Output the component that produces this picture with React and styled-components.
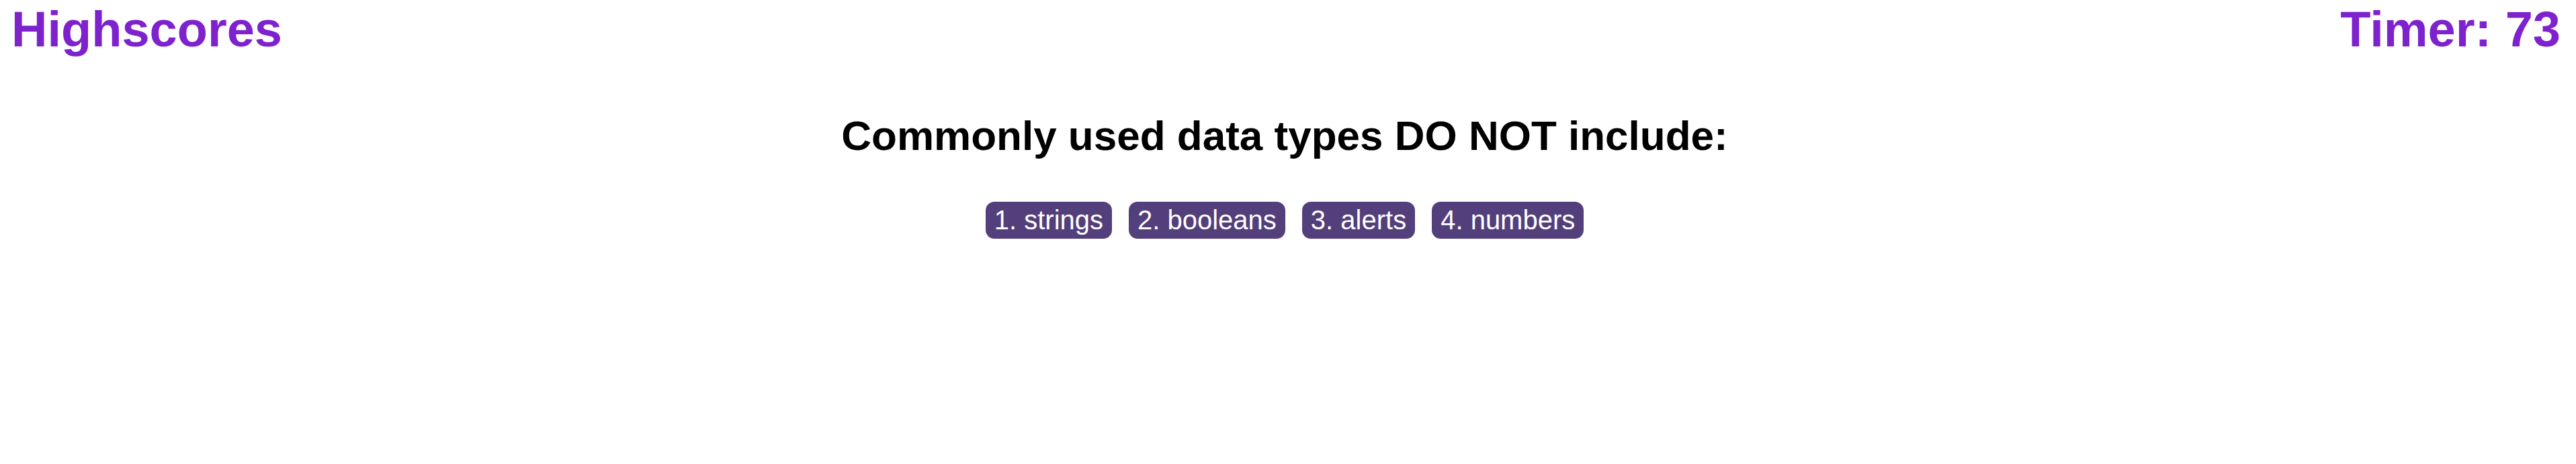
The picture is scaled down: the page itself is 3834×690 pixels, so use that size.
import React from 'react';
import styled, { createGlobalStyle } from 'styled-components';

const GlobalStyle = createGlobalStyle`
  body {
    margin: 0;
    background: #ffffff;
    font-family: "Liberation Sans", Arial, sans-serif;
  }
`;

const Page = styled.div`
  padding: 1px 23px 0 13px;
  display: flex;
  flex-direction: column;
`;

const Header = styled.header`
  display: flex;
  justify-content: space-between;
  align-items: center;
  padding-left: 4px;
`;

const HeaderText = styled.div`
  font-size: 74px;
  font-weight: bold;
  color: #7e22ce;
  line-height: 86px;
`;

const Quiz = styled.main`
  display: flex;
  flex-direction: column;
  align-items: center;
  padding-top: 79px;
`;

const Question = styled.h2`
  margin: 0;
  font-size: 62px;
  font-weight: bold;
  color: #000000;
  line-height: normal;
`;

const Choices = styled.div`
  display: flex;
  gap: 25px;
  margin-top: 63px;
`;

const Choice = styled.button`
  font-family: "Liberation Sans", Arial, sans-serif;
  font-size: 40px;
  line-height: 46px;
  color: #ffffff;
  background: #533f7b;
  border: none;
  border-radius: 13px;
  padding: 4px 13px 5px;
  cursor: pointer;
`;

const choices = ['1. strings', '2. booleans', '3. alerts', '4. numbers'];

export default function App() {
  return (
    <>
      <GlobalStyle />
      <Page>
        <Header>
          <HeaderText>Highscores</HeaderText>
          <HeaderText>Timer: 73</HeaderText>
        </Header>
        <Quiz>
          <Question>Commonly used data types DO NOT include:</Question>
          <Choices>
            {choices.map((c) => (
              <Choice key={c}>{c}</Choice>
            ))}
          </Choices>
        </Quiz>
      </Page>
    </>
  );
}
